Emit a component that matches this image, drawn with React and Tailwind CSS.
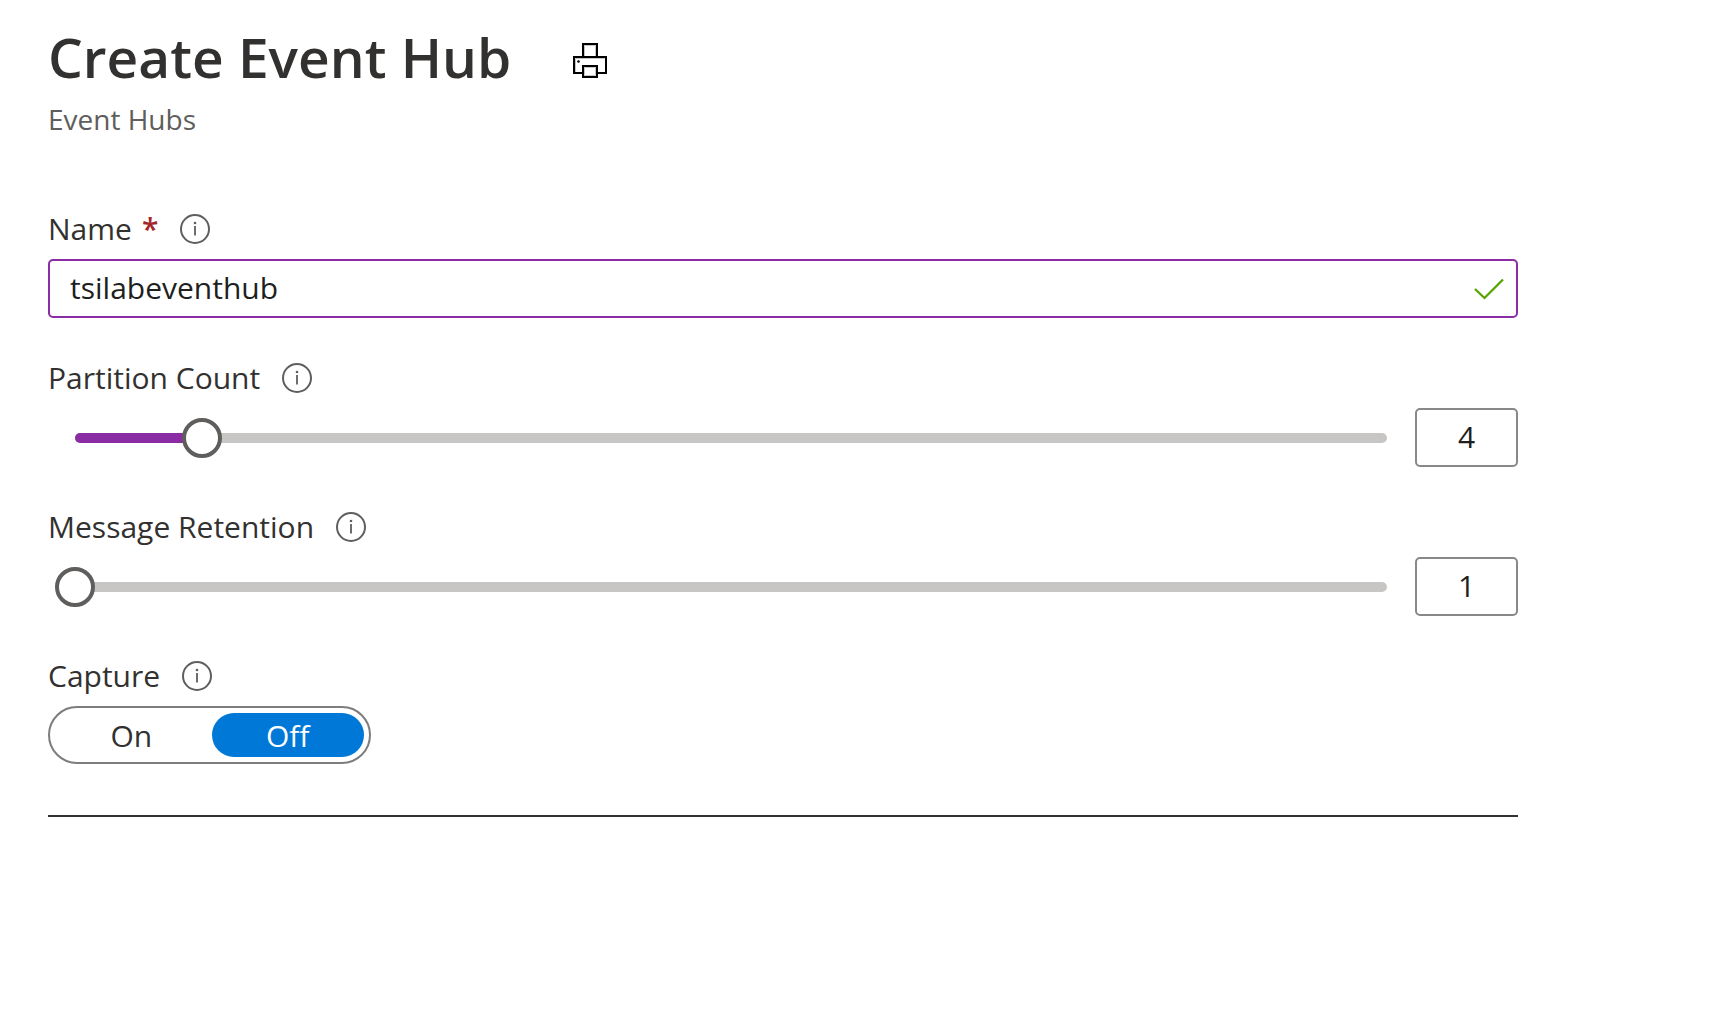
import { useState } from "react";

function PrinterIcon() {
  return (
    <svg viewBox="0 0 34 35" className="h-[35px] w-[34px]" fill="white" stroke="black" strokeWidth="2" aria-hidden="true">
      <path d="M10 14V1H24V14" />
      <path d="M9 30H1V14H33V30H25" />
      <path d="M10 23H24V34H10Z" />
      <path d="M2.500 29V15.500H31.500M11.500 13V2.500H22.500V13M11.500 32.500V24.500H22.500V32.500Z" fill="none" stroke="#c4c4c4" strokeWidth="1" />
      <circle cx="5.500" cy="18.500" r="1.300" fill="black" stroke="none" />
    </svg>
  );
}

function InfoIcon() {
  return (
    <svg viewBox="0 0 30 30" className="size-[30px]" fill="none" stroke="#605e5c" strokeWidth="2" aria-hidden="true">
      <circle cx="15" cy="15" r="14" />
      <path d="M15 12V21.500" strokeWidth="1.800" />
      <circle cx="15" cy="9" r="1.300" fill="#605e5c" stroke="none" />
    </svg>
  );
}

function CheckIcon() {
  return (
    <svg viewBox="0 0 30 22" className="h-[22px] w-[30px]" fill="none" stroke="#57a300" strokeWidth="2.300" aria-hidden="true">
      <path d="M1 11L10.500 20L29 1.500" />
    </svg>
  );
}

function FieldLabel({ id, htmlFor, required, children }) {
  return (
    <div className="mb-[10px] flex h-10 items-center gap-[22px]">
      <label id={id} htmlFor={htmlFor} className="flex gap-[10px] text-[30px] leading-10">
        {children}
        {required && <span className="font-semibold text-[#a4262c]">*</span>}
      </label>
      <button type="button" aria-label={`About ${children}`}>
        <InfoIcon />
      </button>
    </div>
  );
}

function SliderField({ id, label, min, max, initial }) {
  const [value, setValue] = useState(initial);
  const percent = ((value - min) / (max - min)) * 100;
  const update = (event) => setValue(Math.min(max, Math.max(min, Number(event.target.value) || min)));

  return (
    <div>
      <FieldLabel htmlFor={id}>{label}</FieldLabel>
      <div className="flex items-center gap-2 pl-[7px]">
        <div className="grid grow items-center">
          <div className="col-start-1 row-start-1 mx-5 h-[10px] overflow-hidden rounded-full bg-[#c8c6c4]">
            <div className="h-full bg-[#8a2da5]" style={{ width: `${percent}%` }} />
          </div>
          <input
            id={id}
            type="range"
            min={min}
            max={max}
            value={value}
            onChange={update}
            className="col-start-1 row-start-1 h-10 w-full cursor-pointer appearance-none bg-transparent [&::-webkit-slider-thumb]:size-10 [&::-webkit-slider-thumb]:appearance-none [&::-webkit-slider-thumb]:rounded-full [&::-webkit-slider-thumb]:border-4 [&::-webkit-slider-thumb]:border-[#605e5c] [&::-webkit-slider-thumb]:bg-white"
          />
        </div>
        <input
          type="text"
          inputMode="numeric"
          aria-label={`${label} value`}
          value={value}
          onChange={update}
          className="h-[59px] w-[103px] rounded-[5px] border-2 border-[#8a8886] bg-white pb-[3px] text-center text-[30px] text-[#201f1e]"
        />
      </div>
    </div>
  );
}

export default function App() {
  const [name, setName] = useState("tsilabeventhub");
  const [capture, setCapture] = useState("Off");

  return (
    <main className="min-h-screen bg-white pt-6 pr-[200px] pl-12 font-['Open_Sans',sans-serif] text-[#323130]">
      <header className="mb-[70px]">
        <div className="flex items-center gap-[62px]">
          <h1 className="pb-[6px] text-[55px] leading-[66px] font-semibold">Create Event Hub</h1>
          <button type="button" aria-label="Print">
            <PrinterIcon />
          </button>
        </div>
        <p className="mt-[3px] text-[28px] leading-10 text-[#605e5c]">Event Hubs</p>
      </header>

      <form className="flex flex-col gap-10">
        <div>
          <FieldLabel htmlFor="name" required>Name</FieldLabel>
          <div className="flex h-[59px] items-center rounded-[5px] border-2 border-[#8a2da5] pr-3 pl-5">
            <input
              id="name"
              type="text"
              value={name}
              onChange={(event) => setName(event.target.value)}
              className="h-full min-w-0 grow bg-transparent pb-[3px] text-[30px] text-[#201f1e] outline-none"
            />
            <CheckIcon />
          </div>
        </div>

        <SliderField id="partitions" label="Partition Count" min={1} max={32} initial={4} />
        <SliderField id="retention" label="Message Retention" min={1} max={7} initial={1} />

        <div>
          <FieldLabel id="capture">Capture</FieldLabel>
          <div role="group" aria-labelledby="capture" className="flex h-[58px] w-[323px] gap-1 rounded-full border-2 border-[#7f7d7b] p-[5px]">
            {["On", "Off"].map((option) => (
              <button
                key={option}
                type="button"
                aria-pressed={capture === option}
                onClick={() => setCapture(option)}
                className="flex flex-1 items-center justify-center rounded-full text-[30px] aria-pressed:bg-[#0078d7] aria-pressed:text-white"
              >
                {option}
              </button>
            ))}
          </div>
        </div>
      </form>

      <hr className="mt-[51px] border-t-2 border-[#323130]" />
    </main>
  );
}
